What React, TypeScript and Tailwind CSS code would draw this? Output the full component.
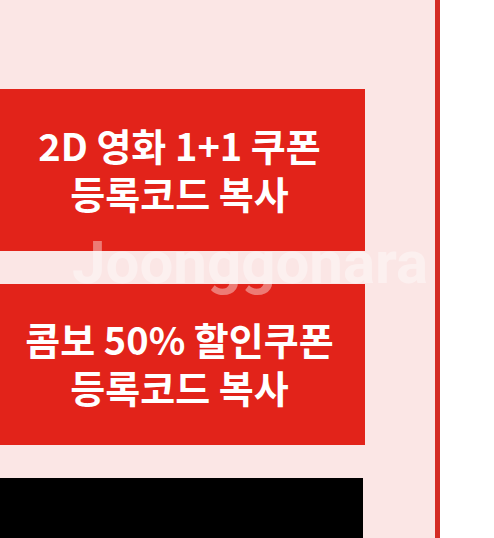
import React from 'react';

const kr = { fontFamily: '"Noto Sans CJK KR", "Noto Sans", sans-serif' };

const CouponButton: React.FC<{ top: string; bottom: string }> = ({ top, bottom }) => (
  <button
    className="w-[365px] h-[162px] bg-[#e2231a] text-white font-bold text-[38px] leading-[48px] flex items-center justify-center text-center pr-[6px] pb-[2px]"
    style={kr}
  >
    <span>
      {top}
      <br />
      {bottom}
    </span>
  </button>
);

const App: React.FC = () => {
  return (
    <div className="relative flex w-[494px] h-[538px] overflow-hidden bg-white">
      {/* Pink panel */}
      <div className="w-[435px] h-full bg-[#fbe6e5] flex flex-col pt-[89px] gap-[33px]">
        <CouponButton top="2D 영화 1+1 쿠폰" bottom="등록코드 복사" />
        <CouponButton top="콤보 50% 할인쿠폰" bottom="등록코드 복사" />
        <div className="w-[363px] h-[60px] bg-black" />
      </div>
      {/* Red edge */}
      <div className="w-[5px] h-full bg-[#d42c25]" />
      <div className="flex-1 bg-white" />

      {/* Watermark */}
      <div
        className="absolute left-[72px] top-[218px] text-[60px] font-bold text-white/40 pointer-events-none"
        style={{ fontFamily: 'Roboto, "Open Sans", sans-serif' }}
      >
        Joonggonara
      </div>
    </div>
  );
};

export default App;
